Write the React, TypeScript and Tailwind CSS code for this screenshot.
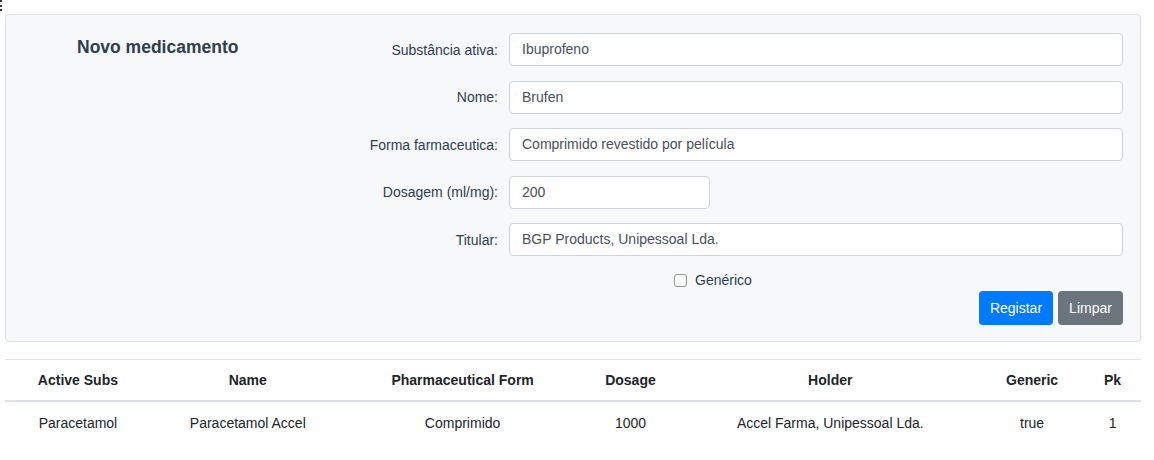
const fields = [
  { label: "Substância ativa:", value: "Ibuprofeno", width: "flex-1" },
  { label: "Nome:", value: "Brufen", width: "flex-1" },
  { label: "Forma farmaceutica:", value: "Comprimido revestido por película", width: "flex-1" },
  { label: "Dosagem (ml/mg):", value: "200", width: "w-[201px]" },
  { label: "Titular:", value: "BGP Products, Unipessoal Lda.", width: "flex-1" },
];

const columns = [
  { title: "Active Subs", value: "Paracetamol", width: "w-[146px]" },
  { title: "Name", value: "Paracetamol Accel", width: "w-[194px]" },
  { title: "Pharmaceutical Form", value: "Comprimido", width: "w-[236px]" },
  { title: "Dosage", value: "1000", width: "w-[100px]" },
  { title: "Holder", value: "Accel Farma, Unipessoal Lda.", width: "w-[300px]" },
  { title: "Generic", value: "true", width: "w-[104px]" },
  { title: "Pk", value: "1", width: "w-[57px]" },
];

export default function App() {
  return (
    <div className="min-h-[460px] bg-white font-['Liberation_Sans',Arial,sans-serif] text-[14px] text-[#2c3e50]">
      <div className="h-[11px] w-[2px] border-l-2 border-dotted border-[#333]" />

      <div className="mx-[5px] mt-[3px] w-[1136px] rounded-[4px] border border-[#dcdfe3] bg-[#f7f8fa] pb-[16px] pt-[18px]">
        <div className="flex">
          {/* Title */}
          <div className="w-[294px] pl-[71px]">
            <h2 className="mt-[2px] text-[17.5px] font-bold leading-[24px] text-[#2c3e50]">Novo medicamento</h2>
          </div>

          {/* Form */}
          <div className="w-[823px]">
            <div className="flex flex-col gap-[14.5px]">
              {fields.map((f) => (
                <div key={f.label} className="flex items-center">
                  <label className="w-[198px] text-right leading-[20px]">{f.label}</label>
                  <div className="w-[11px]" />
                  <div
                    className={`${f.width} flex h-[33px] items-center rounded-[4px] border border-[#ced4da] bg-white px-[12px] text-[#495057]`}
                  >
                    {f.value}
                  </div>
                </div>
              ))}
            </div>

            <div className="mt-[16px] flex items-center justify-center pl-[3px]">
              <span className="h-[13px] w-[13px] rounded-[3px] border border-[#8f959c] bg-white" />
              <span className="ml-[8px] leading-[16px]">Genérico</span>
            </div>

            <div className="mt-[3px] flex justify-end gap-[5px]">
              <button className="h-[34px] w-[74px] rounded-[4px] bg-[#007bff] text-[14px] text-white">Registar</button>
              <button className="h-[34px] w-[65px] rounded-[4px] bg-[#6c757d] text-[14px] text-white">Limpar</button>
            </div>
          </div>
        </div>
      </div>

      {/* Table */}
      <div className="mx-[5px] mt-[17px] w-[1136px] text-[14px] text-[#212529]">
        <div className="flex h-[43px] items-center border-t border-[#dee2e6] border-b-2">
          {columns.map((c) => (
            <div key={c.title} className={`${c.width} text-center font-bold`}>
              {c.title}
            </div>
          ))}
        </div>
        <div className="flex h-[42px] items-center">
          {columns.map((c) => (
            <div key={c.title} className={`${c.width} text-center`}>
              {c.value}
            </div>
          ))}
        </div>
      </div>
    </div>
  );
}
